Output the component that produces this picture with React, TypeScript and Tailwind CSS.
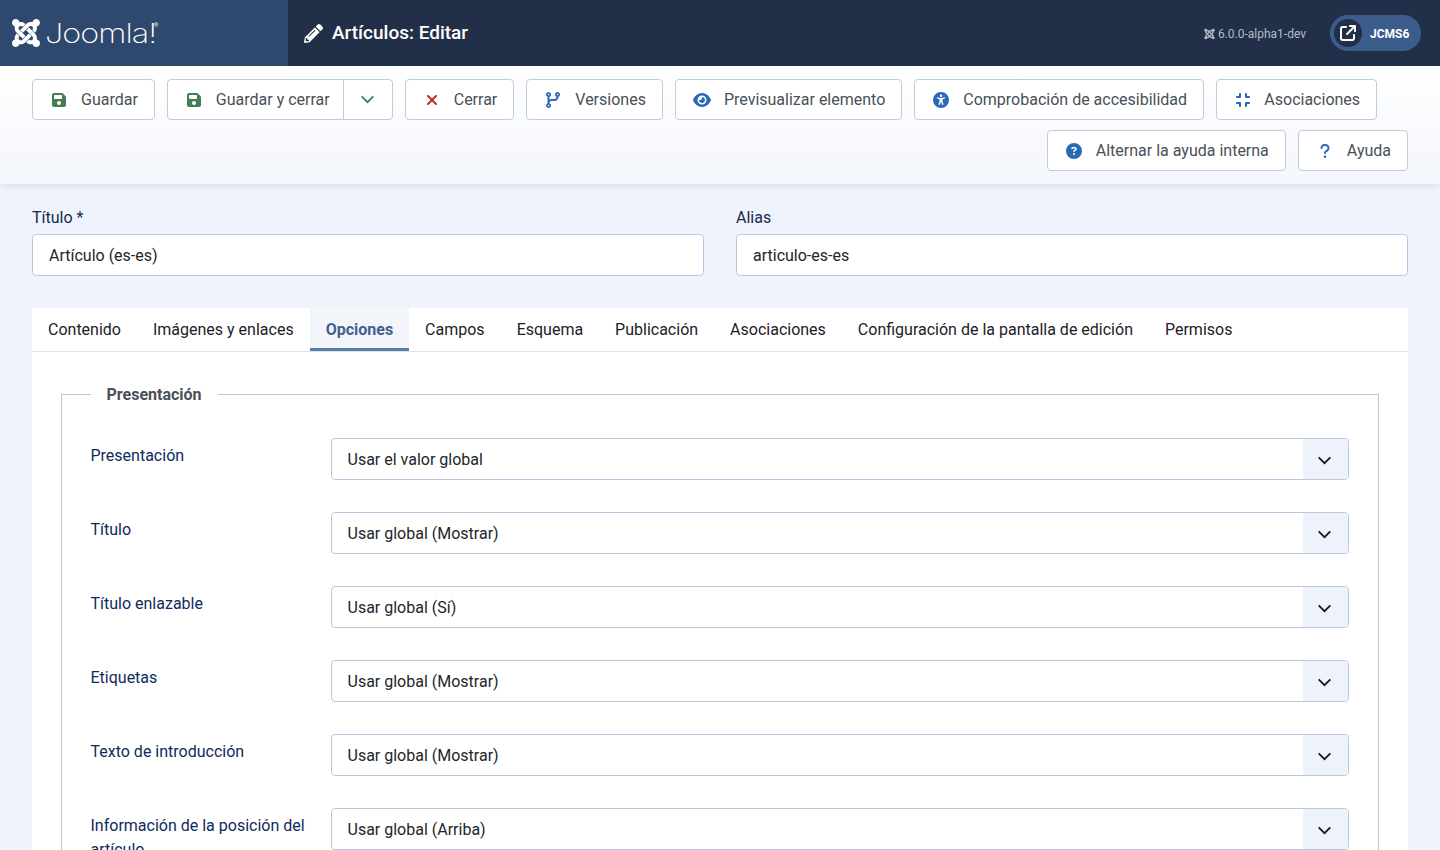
import type { ReactNode } from 'react';
import { FaJoomla, FaPencilAlt } from 'react-icons/fa';
import {
  FaArrowUpRightFromSquare,
  FaCircleQuestion,
  FaCodeBranch,
  FaCompress,
  FaEye,
  FaFloppyDisk,
  FaQuestion,
  FaUniversalAccess,
  FaXmark,
} from 'react-icons/fa6';

const TABS = [
  'Contenido',
  'Imágenes y enlaces',
  'Opciones',
  'Campos',
  'Esquema',
  'Publicación',
  'Asociaciones',
  'Configuración de la pantalla de edición',
  'Permisos',
];

const ROWS = [
  { label: 'Presentación', value: 'Usar el valor global' },
  { label: 'Título', value: 'Usar global (Mostrar)' },
  { label: 'Título enlazable', value: 'Usar global (Sí)' },
  { label: 'Etiquetas', value: 'Usar global (Mostrar)' },
  { label: 'Texto de introducción', value: 'Usar global (Mostrar)' },
  { label: 'Información de la posición del artículo', value: 'Usar global (Arriba)' },
];

function Chevron({ className }: { className: string }) {
  return (
    <svg viewBox="0 0 16 10" className={className} fill="none" stroke="currentColor" strokeWidth="2">
      <path d="M1.5 1.5 8 8l6.5-6.5" />
    </svg>
  );
}

function ToolButton({ icon, label, className = '' }: { icon: ReactNode; label: string; className?: string }) {
  return (
    <button className={`flex h-[41px] items-center rounded-[4px] border border-[#c3cbd9] bg-white pl-[15px] pr-4 text-base text-[#495057] ${className}`}>
      <span className="mr-[11px] flex w-[22px] justify-center">{icon}</span>
      {label}
    </button>
  );
}

export default function App() {
  return (
    <div className="h-screen overflow-hidden bg-[#eff3fb] font-['Roboto',sans-serif]">
      <header className="flex h-[66px] bg-[#212f48] text-white">
        <div className="flex w-[288px] items-center bg-[#2e496d] pl-[11px]">
          <FaJoomla className="h-[32px] w-[30px] shrink-0" />
          <span className="ml-[4px] inline-block origin-left scale-x-[1.2] font-['Inter',sans-serif] text-[27px] font-extralight leading-none tracking-[-0.8px]">Joomla!</span>
          <span className="mb-[16px] ml-[16px] text-[6px] leading-none">®</span>
        </div>
        <div className="flex flex-1 items-center pl-4 pr-[19px]">
          <FaPencilAlt className="mr-[9px] h-[19px] w-[19px]" />
          <h1 className="text-[19px] font-medium">Artículos: Editar</h1>
          <div className="ml-auto flex items-center gap-[3px] pt-[1px] text-xs text-[#b4bbc7]">
            <FaJoomla className="h-[12px] w-[11px]" />
            6.0.0-alpha1-dev
          </div>
          <div className="ml-6 flex h-9 w-[91px] items-center rounded-full bg-[#3c5d8c] pl-1">
            <span className="flex h-7 w-7 items-center justify-center rounded-full bg-[#212f48]">
              <FaArrowUpRightFromSquare className="h-4 w-4" />
            </span>
            <span className="ml-[8px] pt-[1px] text-xs font-bold">JCMS6</span>
          </div>
        </div>
      </header>

      <div className="flex h-[118px] flex-wrap content-start gap-x-3 gap-y-[10px] bg-gradient-to-b from-white to-[#f3f6fb] px-8 pt-[13px] shadow-[0_2px_6px_rgba(30,50,90,0.1)]">
        <ToolButton icon={<FaFloppyDisk className="h-4 w-4 text-[#457d54]" />} label="Guardar" />
        <div className="flex h-[41px] rounded-[4px] border border-[#c3cbd9] bg-white text-base text-[#495057]">
          <button className="flex items-center border-r border-[#c3cbd9] pl-[15px] pr-[13px]">
            <span className="mr-[11px] flex w-[22px] justify-center">
              <FaFloppyDisk className="h-4 w-4 text-[#457d54]" />
            </span>
            Guardar y cerrar
          </button>
          <button className="flex w-[48px] items-center justify-center">
            <Chevron className="h-[9px] w-[15px] text-[#457d54]" />
          </button>
        </div>
        <ToolButton icon={<FaXmark className="h-[16px] w-[16px] text-[#c52827]" />} label="Cerrar" />
        <ToolButton icon={<FaCodeBranch className="h-4 w-4 text-[#2a69b8]" />} label="Versiones" />
        <ToolButton icon={<FaEye className="h-4 w-[18px] text-[#2a69b8]" />} label="Previsualizar elemento" />
        <ToolButton icon={<FaUniversalAccess className="h-4 w-4 text-[#2a69b8]" />} label="Comprobación de accesibilidad" />
        <ToolButton className="w-[161px]" icon={<FaCompress className="h-4 w-4 text-[#2a69b8]" />} label="Asociaciones" />
        <ToolButton className="ml-auto" icon={<FaCircleQuestion className="h-4 w-4 text-[#2a69b8]" />} label="Alternar la ayuda interna" />
        <ToolButton icon={<FaQuestion className="h-4 w-4 text-[#2a69b8]" />} label="Ayuda" />
      </div>

      <main className="px-8 pt-[22px]">
        <div className="grid grid-cols-2 gap-8">
          <div>
            <label className="mb-[4px] block text-base leading-6 text-[#152a4f]">Título *</label>
            <input readOnly value="Artículo (es-es)" className="h-[42px] w-full rounded-[4px] border border-[#b9c8e0] bg-white px-4 text-base text-[#22262a]" />
          </div>
          <div>
            <label className="mb-[4px] block text-base leading-6 text-[#152a4f]">Alias</label>
            <input readOnly value="articulo-es-es" className="h-[42px] w-full rounded-[4px] border border-[#b9c8e0] bg-white px-4 text-base text-[#22262a]" />
          </div>
        </div>

        <section className="mt-8 rounded-t-[4px] bg-white">
          <nav className="flex h-[44px] border-b border-[#dfe3ea]">
            {TABS.map(tab =>
              tab === 'Opciones' ? (
                <span key={tab} className="flex h-[43px] items-center border-b-[3px] border-[#5a7ca8] bg-[#f2f6fb] px-4 pt-[3px] text-base font-bold text-[#3f618d]">
                  {tab}
                </span>
              ) : (
                <span key={tab} className="flex h-[43px] items-center px-4 text-base text-[#1d2125]">
                  {tab}
                </span>
              ),
            )}
          </nav>

          <div className="px-[29px] pt-[30px]">
            <fieldset className="border border-[#b9c8e0] pb-8 pl-[28.5px] pr-[29px]">
              <legend className="ml-[0.5px] pl-[15.5px] pr-[16.5px] pt-[1px] text-base font-bold leading-6 text-[#495057]">Presentación</legend>
              <div className="mt-[31px] flex flex-col gap-8">
                {ROWS.map(row => (
                  <div key={row.label} className="flex">
                    <label className="w-[240.5px] pr-2 pt-[6px] text-base leading-6 text-[#0f2b5e]">{row.label}</label>
                    <div className="flex h-[42px] flex-1 overflow-hidden rounded-[4px] border border-[#b9c8e0] bg-white">
                      <span className="flex flex-1 items-center pl-[15.5px] pr-4 pt-[2px] text-base text-[#22262a]">{row.value}</span>
                      <span className="flex w-[45px] items-center justify-center bg-[#eef3fb] pr-[2px] pt-[2px]">
                        <Chevron className="h-[9px] w-[15px] text-[#16191d]" />
                      </span>
                    </div>
                  </div>
                ))}
              </div>
            </fieldset>
          </div>
        </section>
      </main>
    </div>
  );
}
